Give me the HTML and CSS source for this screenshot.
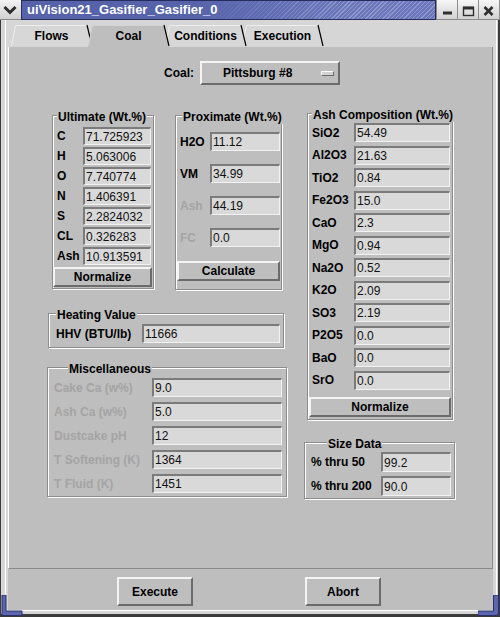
FILE: index.html
```html
<!DOCTYPE html>
<html>
<head>
<meta charset="utf-8">
<title>uiVision21_Gasifier_Gasifier_0</title>
<link rel="stylesheet" href="styles.css">
</head>
<body>
<div class="window">
  <div class="titlebar">
    <div class="tb-menu"><svg width="21" height="19" viewBox="0 0 21 19"><polyline points="4.5,7 10,12.5 15.5,7" fill="none" stroke="#2b2b2b" stroke-width="3"/></svg></div>
    <div class="tb-title">uiVision21_Gasifier_Gasifier_0</div>
    <div class="tb-btn"><svg width="20" height="19" viewBox="0 0 20 19"><rect x="6" y="11.5" width="9" height="3" fill="#2f2f2f"/></svg></div>
    <div class="tb-btn"><svg width="20" height="19" viewBox="0 0 20 19"><rect x="5.5" y="7.5" width="10" height="8" fill="none" stroke="#2f2f2f" stroke-width="1.4"/><rect x="5" y="6.5" width="11" height="3" fill="#2f2f2f"/></svg></div>
    <div class="tb-btn last"><svg width="21" height="19" viewBox="0 0 21 19"><path d="M5.5 7 L13.5 15 M13.5 7 L5.5 15" stroke="#2f2f2f" stroke-width="2.6" fill="none"/></svg></div>
  </div>
  <div class="frame">
    <div class="frame-in">
      <div class="tabs">
        <div class="tab t-flows"><svg class="tab-bg" width="81" height="21" viewBox="0 0 81 21"><polygon points="0,21 4,0 76,0 81,21" fill="#d7d7d7"/><polyline points="0.5,21 4.5,0.5 76,0.5" fill="none" stroke="#ededed"/><line x1="76" y1="0" x2="81" y2="21" stroke="#000" stroke-width="1.2"/></svg><span>Flows</span></div>
        <div class="tab t-coal"><svg class="tab-bg" width="81" height="22" viewBox="0 0 81 22"><polygon points="0,22 4,0 76,0 81,22" fill="#bebebe"/><polyline points="0.5,21 4.5,0.5 76,0.5" fill="none" stroke="#d2d2d2"/><line x1="76" y1="0" x2="81" y2="21" stroke="#000" stroke-width="1.2"/></svg><span>Coal</span></div>
        <div class="tab t-cond"><svg class="tab-bg" width="81" height="21" viewBox="0 0 81 21"><polygon points="0,21 4,0 76,0 81,21" fill="#d7d7d7"/><polyline points="0.5,21 4.5,0.5 76,0.5" fill="none" stroke="#ededed"/><line x1="76" y1="0" x2="81" y2="21" stroke="#000" stroke-width="1.2"/></svg><span>Conditions</span></div>
        <div class="tab t-exec"><svg class="tab-bg" width="81" height="21" viewBox="0 0 81 21"><polygon points="0,21 4,0 76,0 81,21" fill="#d7d7d7"/><polyline points="0.5,21 4.5,0.5 76,0.5" fill="none" stroke="#ededed"/><line x1="76" y1="0" x2="81" y2="21" stroke="#000" stroke-width="1.2"/></svg><span>Execution</span></div>
      </div>

      <div class="panel">
        <div class="coal-row">
          <span class="lbl">Coal:</span>
          <div class="combo"><span>Pittsburg #8</span><i class="combo-ind"></i></div>
        </div>

        <div class="columns">
          <div class="col-left">
            <div class="pair">
              <div class="group g-ult">
                <div class="legend">Ultimate (Wt.%)</div>
                <div class="rows">
                  <div class="row"><span class="lbl">C</span><span class="field">71.725923</span></div>
                  <div class="row"><span class="lbl">H</span><span class="field">5.063006</span></div>
                  <div class="row"><span class="lbl">O</span><span class="field">7.740774</span></div>
                  <div class="row"><span class="lbl">N</span><span class="field">1.406391</span></div>
                  <div class="row"><span class="lbl">S</span><span class="field">2.2824032</span></div>
                  <div class="row"><span class="lbl">CL</span><span class="field">0.326283</span></div>
                  <div class="row"><span class="lbl">Ash</span><span class="field">10.913591</span></div>
                </div>
                <button class="btn">Normalize</button>
              </div>

              <div class="group g-prox">
                <div class="legend">Proximate (Wt.%)</div>
                <div class="rows">
                  <div class="row"><span class="lbl">H2O</span><span class="field">11.12</span></div>
                  <div class="row"><span class="lbl">VM</span><span class="field">34.99</span></div>
                  <div class="row"><span class="lbl dis">Ash</span><span class="field">44.19</span></div>
                  <div class="row"><span class="lbl dis">FC</span><span class="field">0.0</span></div>
                </div>
                <button class="btn">Calculate</button>
              </div>
            </div>

            <div class="group g-heat">
              <div class="legend">Heating Value</div>
              <div class="rows">
                <div class="row"><span class="lbl">HHV (BTU/lb)</span><span class="field">11666</span></div>
              </div>
            </div>

            <div class="group g-misc">
              <div class="legend">Miscellaneous</div>
              <div class="rows">
                <div class="row"><span class="lbl dis">Cake Ca (w%)</span><span class="field">9.0</span></div>
                <div class="row"><span class="lbl dis">Ash Ca (w%)</span><span class="field">5.0</span></div>
                <div class="row"><span class="lbl dis">Dustcake pH</span><span class="field">12</span></div>
                <div class="row"><span class="lbl dis">T Softening (K)</span><span class="field">1364</span></div>
                <div class="row"><span class="lbl dis">T Fluid (K)</span><span class="field">1451</span></div>
              </div>
            </div>
          </div>

          <div class="col-right">
            <div class="group g-ash">
              <div class="legend">Ash Composition (Wt.%)</div>
              <div class="rows">
                <div class="row"><span class="lbl">SiO2</span><span class="field">54.49</span></div>
                <div class="row"><span class="lbl">Al2O3</span><span class="field">21.63</span></div>
                <div class="row"><span class="lbl">TiO2</span><span class="field">0.84</span></div>
                <div class="row"><span class="lbl">Fe2O3</span><span class="field">15.0</span></div>
                <div class="row"><span class="lbl">CaO</span><span class="field">2.3</span></div>
                <div class="row"><span class="lbl">MgO</span><span class="field">0.94</span></div>
                <div class="row"><span class="lbl">Na2O</span><span class="field">0.52</span></div>
                <div class="row"><span class="lbl">K2O</span><span class="field">2.09</span></div>
                <div class="row"><span class="lbl">SO3</span><span class="field">2.19</span></div>
                <div class="row"><span class="lbl">P2O5</span><span class="field">0.0</span></div>
                <div class="row"><span class="lbl">BaO</span><span class="field">0.0</span></div>
                <div class="row"><span class="lbl">SrO</span><span class="field">0.0</span></div>
              </div>
              <button class="btn">Normalize</button>
            </div>

            <div class="group g-size">
              <div class="legend">Size Data</div>
              <div class="rows">
                <div class="row"><span class="lbl">% thru 50</span><span class="field">99.2</span></div>
                <div class="row"><span class="lbl">% thru 200</span><span class="field">90.0</span></div>
              </div>
            </div>
          </div>
        </div>
      </div>

      <div class="actions">
        <button class="btn abtn">Execute</button>
        <button class="btn abtn">Abort</button>
      </div>
    </div>
  </div>
  <svg class="corner corner-l" width="23" height="22" viewBox="0 0 23 22"><path d="M2 0 H6 V16 H22 V20.5 H2 Z" fill="#5a66b0" stroke="#2b3165" stroke-width="1"/></svg>
  <svg class="corner corner-r" width="22" height="22" viewBox="0 0 22 22"><path d="M15.5 0 H20.5 V18 Q20.5 20.5 18 20.5 H0 V16 H15.5 Z" fill="#5a66b0" stroke="#2b3165" stroke-width="1"/></svg>
</div>
</body>
</html>
```
FILE: styles.css
```css
* { box-sizing: border-box; }
html, body { margin: 0; padding: 0; }
body {
  width: 500px;
  height: 617px;
  overflow: hidden;
  background: #d6d6d6;
  font-family: "Liberation Sans", Arial, Helvetica, sans-serif;
  font-size: 12px;
  color: #000;
}
.window { position: relative; width: 500px; height: 617px; }

/* ---------- title bar ---------- */
.titlebar { display: flex; height: 20px; }
.tb-menu {
  width: 21px; height: 20px;
  background: linear-gradient(#f3f3f3, #d0d0d0);
  border-bottom: 1px solid #8c8c8c;
}
.tb-menu svg, .tb-btn svg { display: block; }
.tb-title {
  width: 415px; height: 20px;
  border: 1px solid #262c5c;
  color: #fff;
  font-weight: bold;
  font-size: 13px;
  line-height: 18px;
  padding-left: 5px;
  white-space: nowrap;
  background:
    linear-gradient(to right, #5663aa 0%, #5663aa 42%, rgba(86,99,170,0) 78%),
    repeating-linear-gradient(135deg, #8f99d0 0 1px, #6b77ba 1px 3px);
}
.tb-btn {
  width: 21px; height: 20px;
  border-left: 1px solid #8c8c8c;
  border-bottom: 1px solid #8c8c8c;
  background: linear-gradient(#f6f6f6, #d2d2d2);
}
.tb-btn.last { width: 22px; border-right: 1px solid #8c8c8c; }

/* ---------- window frame ---------- */
.frame {
  height: 597px;
  border-left: 1px solid #3a3a3a;
  border-right: 2px solid #3a3a3a;
  border-bottom: 3px solid #3a3a3a;
  padding: 0 1px 3px 4px;
  background: #d6d6d6;
}
.frame-in {
  height: 591px;
  border-left: 1px solid #fff;
  border-right: 1px solid #fff;
  border-bottom: 1px solid #fff;
  padding: 0 3px 0 2px;
  display: flex;
  flex-direction: column;
}

/* ---------- tabs ---------- */
.tabs {
  height: 27px;
  padding: 5px 0 0 3px;
  display: flex;
  align-items: flex-start;
}
.tab {
  position: relative;
  width: 81px;
  height: 21px;
  margin-right: -4px;
  display: flex;
  align-items: center;
  justify-content: center;
  font-weight: bold;
  white-space: nowrap;
}
.tab-bg { position: absolute; left: 0; top: 0; overflow: visible; }
.tab span { position: relative; }
.t-flows { z-index: 4; }
.t-coal { z-index: 6; }
.t-cond { z-index: 3; }
.t-exec { z-index: 2; }

/* ---------- panel ---------- */
.panel {
  height: 522px;
  background: #bebebe;
  border-left: 1px solid #fff;
  border-right: 1px solid #8a8a8a;
  border-bottom: 1px solid #8a8a8a;
}
.coal-row {
  margin-top: 14px;
  height: 24px;
  display: flex;
  justify-content: center;
  align-items: center;
  gap: 6px;
  padding-left: 3px;
}
.combo {
  width: 140px;
  height: 24px;
  border: 2px solid;
  border-color: #f4f4f4 #6c6c6c #6c6c6c #f4f4f4;
  display: flex;
  align-items: center;
  padding-left: 21px;
  font-weight: bold;
  white-space: nowrap;
}
.combo-ind {
  margin-left: auto;
  margin-right: 4px;
  width: 13px;
  height: 5px;
  background: #d2d2d2;
  border-top: 1px solid #fff;
  border-left: 1px solid #fff;
  border-bottom: 1px solid #6c6c6c;
  border-right: 1px solid #6c6c6c;
}

.columns { display: flex; align-items: flex-start; }
.col-left {
  margin-left: 38px;
  width: 240px;
  display: flex;
  flex-direction: column;
  align-items: flex-start;
}
.col-right {
  margin-left: 17px;
  margin-top: 28px;
  width: 151px;
  display: flex;
  flex-direction: column;
  align-items: flex-start;
}
.pair { display: flex; align-items: flex-start; margin-top: 30px; }

/* ---------- etched groups ---------- */
.group {
  border: 1px solid #8c8c8c;
  box-shadow: inset 1px 1px 0 #fff, 1px 1px 0 #fff;
  display: flex;
  flex-direction: column;
  align-items: flex-start;
}
.legend {
  height: 14px;
  line-height: 14px;
  margin-top: -6px;
  margin-bottom: -8px;
  padding: 0 1px;
  background: #bebebe;
  font-weight: bold;
  white-space: nowrap;
  position: relative;
}
.rows { display: flex; flex-direction: column; }
.row { display: flex; align-items: center; }
.lbl { font-weight: bold; white-space: nowrap; }
.dis { color: #a4a4a4; }

.field {
  display: flex;
  align-items: center;
  background: #d9d9d9;
  border-style: solid;
  border-width: 2px 1px 1px 2px;
  border-color: #7b7b7b #f2f2f2 #f2f2f2 #7b7b7b;
  padding-left: 1px;
  font-weight: normal;
  white-space: nowrap;
  overflow: hidden;
  color: #111;
}

.btn {
  font: bold 12px "Liberation Sans", Arial, Helvetica, sans-serif;
  color: #000;
  background: #bebebe;
  border: 2px solid;
  border-color: #f4f4f4 #6b6b6b #6b6b6b #f4f4f4;
  padding: 0;
  display: flex;
  align-items: center;
  justify-content: center;
}

/* Ultimate */
.g-ult { margin-left: 5px; width: 102px; height: 174px; }
.g-ult .legend { margin-left: 4px; }
.g-ult .rows { gap: 2px; margin-top: 11px; }
.g-ult .row { padding-left: 4px; }
.g-ult .lbl { width: 26px; }
.g-ult .field { width: 68px; height: 18px; }
.g-ult .btn { margin-top: 2px; width: 99px; height: 20px; }

/* Proximate */
.g-prox { margin-left: 21px; width: 107px; height: 175px; }
.g-prox .legend { margin-left: 6px; }
.g-prox .rows { gap: 13px; margin-top: 16px; }
.g-prox .row { padding-left: 4px; }
.g-prox .lbl { width: 30px; }
.g-prox .field { width: 70px; height: 19px; }
.g-prox .btn { margin: 14px 0 0 1px; width: 103px; height: 20px; }

/* Heating value */
.g-heat { margin: 23px 0 0 1px; width: 236px; height: 35px; }
.g-heat .legend { margin-left: 7px; }
.g-heat .rows { margin-top: 10px; }
.g-heat .row { padding-left: 7px; }
.g-heat .lbl { width: 86px; }
.g-heat .field { width: 138px; height: 19px; }

/* Miscellaneous */
.g-misc { margin-top: 19px; width: 240px; height: 130px; }
.g-misc .legend { margin-left: 20px; }
.g-misc .rows { gap: 5px; margin-top: 10px; }
.g-misc .row { padding-left: 6px; }
.g-misc .lbl { width: 98px; }
.g-misc .field { width: 130px; height: 19px; }

/* Ash composition */
.g-ash { margin-left: 3px; width: 146px; height: 307px; }
.g-ash .legend { margin-left: 4px; }
.g-ash .rows { gap: 3.5px; margin-top: 9px; }
.g-ash .row { padding-left: 4px; }
.g-ash .lbl { width: 42px; }
.g-ash .field { width: 96px; height: 19px; }
.g-ash .btn { margin: 7.5px 0 0 1px; width: 142px; height: 20px; }

/* Size data */
.g-size { margin-top: 22px; width: 151px; height: 57px; }
.g-size .legend { margin-left: 22px; }
.g-size .rows { gap: 4px; margin-top: 9px; }
.g-size .row { padding-left: 6px; }
.g-size .lbl { width: 70px; }
.g-size .field { width: 70px; height: 20px; }

/* ---------- bottom actions ---------- */
.actions {
  height: 41px;
  background: #bebebe;
  display: flex;
  align-items: flex-start;
  padding: 8px 0 0 109px;
  gap: 112px;
}
.abtn { width: 76px; height: 29px; }

/* ---------- decorative window corners ---------- */
.corner { position: absolute; bottom: 0; display: block; }
.corner-l { left: 0; }
.corner-r { right: 0; }
```
